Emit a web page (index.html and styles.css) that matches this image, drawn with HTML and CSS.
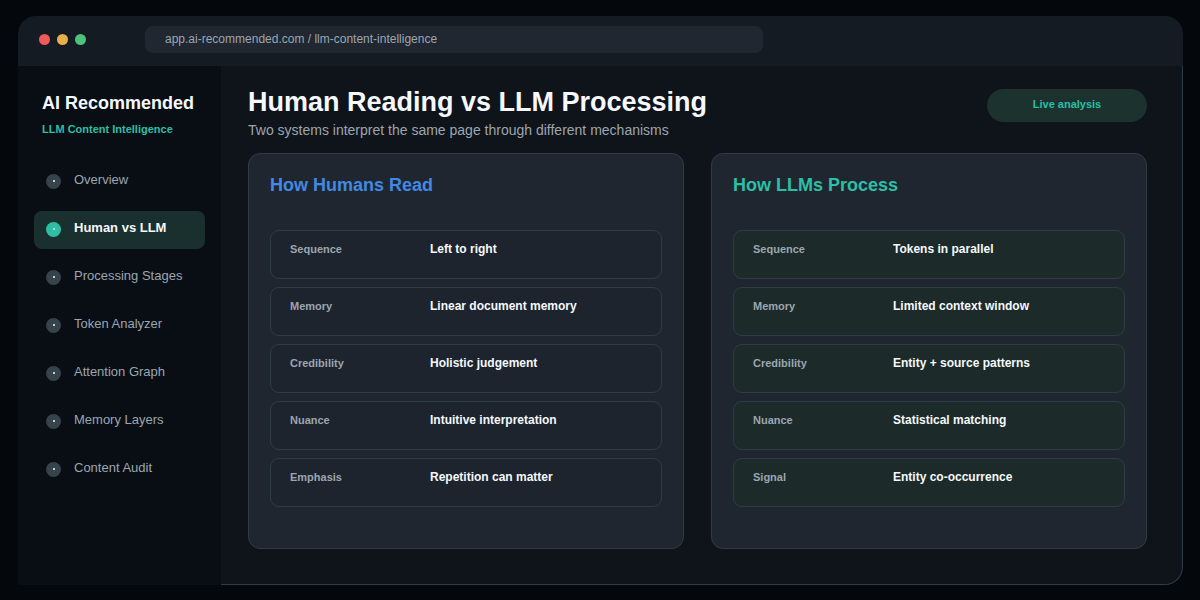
FILE: index.html
```html
<!DOCTYPE html>
<html lang="en">
<head>
  <meta charset="UTF-8">
  <meta name="viewport" content="width=device-width, initial-scale=1.0">
  <title>AI Recommended</title>
  <link rel="stylesheet" href="styles.css">
</head>
<body>

  <div class="window">
    <header class="topbar">
      <div class="dots">
        <span class="dot red"></span>
        <span class="dot yellow"></span>
        <span class="dot green"></span>
      </div>
      <input class="url" type="text" aria-label="Address" value="app.ai-recommended.com / llm-content-intelligence" readonly>
    </header>

    <div class="layout">
      <aside class="sidebar">
        <div class="brand">AI Recommended</div>
        <div class="tagline">LLM Content Intelligence</div>
        <nav class="menu">
          <a href="#"><span class="icon"></span><span class="name">Overview</span></a>
          <a href="#" class="active"><span class="icon"></span><span class="name">Human vs LLM</span></a>
          <a href="#"><span class="icon"></span><span class="name">Processing Stages</span></a>
          <a href="#"><span class="icon"></span><span class="name">Token Analyzer</span></a>
          <a href="#"><span class="icon"></span><span class="name">Attention Graph</span></a>
          <a href="#"><span class="icon"></span><span class="name">Memory Layers</span></a>
          <a href="#"><span class="icon"></span><span class="name">Content Audit</span></a>
        </nav>
      </aside>

      <main class="main">
        <div class="heading">
          <div>
            <h1>Human Reading vs LLM Processing</h1>
            <p>Two systems interpret the same page through different mechanisms</p>
          </div>
          <span class="badge">Live analysis</span>
        </div>

        <div class="cards">
          <section class="card human">
            <h2>How Humans Read</h2>
            <dl>
              <div class="row"><dt>Sequence</dt><dd>Left to right</dd></div>
              <div class="row"><dt>Memory</dt><dd>Linear document memory</dd></div>
              <div class="row"><dt>Credibility</dt><dd>Holistic judgement</dd></div>
              <div class="row"><dt>Nuance</dt><dd>Intuitive interpretation</dd></div>
              <div class="row"><dt>Emphasis</dt><dd>Repetition can matter</dd></div>
            </dl>
          </section>

          <section class="card llm">
            <h2>How LLMs Process</h2>
            <dl>
              <div class="row"><dt>Sequence</dt><dd>Tokens in parallel</dd></div>
              <div class="row"><dt>Memory</dt><dd>Limited context window</dd></div>
              <div class="row"><dt>Credibility</dt><dd>Entity + source patterns</dd></div>
              <div class="row"><dt>Nuance</dt><dd>Statistical matching</dd></div>
              <div class="row"><dt>Signal</dt><dd>Entity co-occurrence</dd></div>
            </dl>
          </section>
        </div>
      </main>
    </div>
  </div>

</body>
</html>
```
FILE: styles.css
```css
* {
  box-sizing: border-box;
}

body {
  margin: 0;
  padding: 16px 17px 15px 18px;
  min-height: 100vh;
  display: flex;
  background: #04070b;
  color: #f5f8fc;
  font-family: "Liberation Sans", Arial, sans-serif;
}

h1, h2, p, dl, dd {
  margin: 0;
}

.window {
  flex: 1;
  display: flex;
  flex-direction: column;
}

/* browser bar */
.topbar {
  display: flex;
  align-items: center;
  height: 50px;
  padding: 0 21px 3px;
  background: #141b22;
  border-radius: 18px 18px 0 0;
}

.dots {
  display: flex;
  gap: 7px;
  width: 106px;
}

.dot {
  width: 11px;
  height: 11px;
  border-radius: 50%;
}

.red { background: #ef5b5b; }
.yellow { background: #e8b04a; }
.green { background: #4cc379; }

.url {
  width: 55%;
  height: 27px;
  padding: 0 20px 2px;
  border: none;
  border-radius: 8px;
  outline: none;
  background: #202730;
  color: #9ba6b0;
  font-family: inherit;
  font-size: 12px;
}

.layout {
  flex: 1;
  display: flex;
}

/* sidebar */
.sidebar {
  width: 203px;
  padding: 26px 16px;
  background: #090e15;
}

.brand {
  padding-left: 8px;
  font-size: 18px;
  line-height: 22px;
  font-weight: bold;
  white-space: nowrap;
}

.tagline {
  margin-top: 7px;
  padding-left: 8px;
  font-size: 11px;
  line-height: 16px;
  font-weight: bold;
  color: #2cbfa5;
}

.menu {
  display: flex;
  flex-direction: column;
  gap: 10px;
  margin-top: 26px;
}

.menu a {
  display: flex;
  align-items: center;
  gap: 13px;
  height: 38px;
  padding: 0 12px 2px;
  border-radius: 8px;
  color: #9ba6b0;
  font-size: 13px;
  text-decoration: none;
}

.menu .name {
  padding-bottom: 4px;
}

.menu .active {
  background: #1a302e;
  color: #f5f8fc;
  font-weight: bold;
}

.icon {
  display: flex;
  align-items: center;
  justify-content: center;
  width: 15px;
  height: 15px;
  border-radius: 50%;
  background: #37434a;
}

.icon::before {
  content: "";
  width: 2px;
  height: 2px;
  background: #c3ccd2;
}

.active .icon {
  background: #2cbfa5;
}

/* content */
.main {
  flex: 1;
  padding: 20px 35px 35px 27px;
  background: #0f131a;
  border: solid #2f3c46;
  border-width: 0 1px 1px 0;
  border-bottom-right-radius: 18px;
}

.heading {
  display: flex;
  justify-content: space-between;
  align-items: flex-start;
}

h1 {
  font-size: 27px;
  line-height: 32px;
}

.heading p {
  margin-top: 2px;
  font-size: 14px;
  line-height: 20px;
  color: #9ba6b0;
}

.badge {
  width: 160px;
  margin-top: 3px;
  padding-bottom: 3px;
  border-radius: 17px;
  background: #1b322f;
  color: #2cbfa5;
  font-size: 11px;
  line-height: 30px;
  font-weight: bold;
  text-align: center;
}

.cards {
  display: grid;
  grid-template-columns: 1fr 1fr;
  gap: 27px;
  margin-top: 13px;
}

.card {
  padding: 20px 21px 41px;
  background: #1f262f;
  border: 1px solid #2f3c46;
  border-radius: 12px;
}

h2 {
  margin-bottom: 34px;
  font-size: 18px;
  line-height: 22px;
}

.human h2 { color: #4189e3; }
.llm h2 { color: #2cbfa5; }

.card dl {
  display: grid;
  gap: 8px;
}

.row {
  display: grid;
  grid-template-columns: 140px 1fr;
  height: 49px;
  padding: 10px 19px;
  border: 1px solid #2f3c46;
  border-radius: 9px;
  background: #1d242d;
  font-size: 12px;
  line-height: 16px;
  font-weight: bold;
}

.row dt {
  font-size: 11px;
  color: #9ba6b0;
}

.llm .row {
  background: #1c2a29;
}
```
